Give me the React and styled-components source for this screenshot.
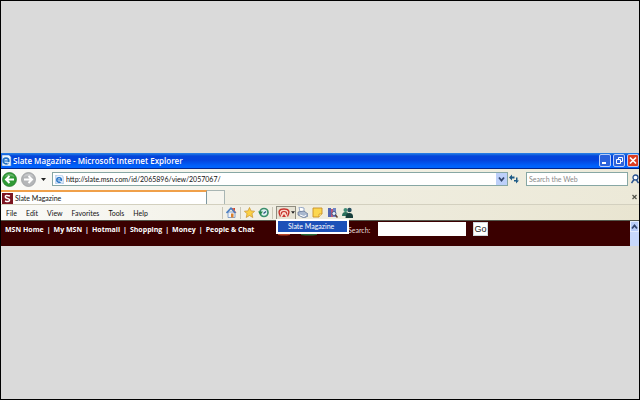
import React, { useState } from "react";
import styled, { createGlobalStyle } from "styled-components";

const GlobalStyle = createGlobalStyle`
  * {
    box-sizing: border-box;
  }
  body {
    margin: 0;
    background: #dadada;
    font-family: Lato, "Noto Sans", sans-serif;
    font-size: 7px;
    color: #111;
  }
  button,
  input {
    font: inherit;
    margin: 0;
    padding: 0;
    border: none;
    border-radius: 0;
    background: none;
    color: inherit;
  }
  svg {
    display: block;
    flex: none;
  }
`;

const Desktop = styled.div`
  min-height: 100vh;
  padding-bottom: 1px;
  display: flex;
  align-items: center;
  border: 1px solid #000;
  background: #dadada;
`;

const Window = styled.div`
  flex: 1;
  min-width: 0;
`;

const TitleBar = styled.header`
  height: 16px;
  display: flex;
  align-items: center;
  gap: 1px;
  border-bottom: 1px solid #00258c;
  background: linear-gradient(#2a86e6 0, #0445da 3px, #0443dc 7px, #0062fc 13px);
  h1 {
    flex: 1;
    margin: 0;
    font-family: "Open Sans", "Noto Sans", sans-serif;
    font-size: 8px;
    line-height: 12px;
    font-weight: 600;
    color: #fff;
    white-space: nowrap;
  }
`;

const WindowButton = styled.button`
  width: 12px;
  height: 13px;
  margin-left: 1px;
  border: 1px solid #b9cdf8;
  border-radius: 2px;
  background: ${(props) => (props.$close ? "#dc3c22" : "#2c62dc")};
`;

const AddressRow = styled.div`
  height: 21px;
  padding-bottom: 1px;
  display: flex;
  align-items: center;
  background: linear-gradient(90deg, #fafaf8, #f4f3ea 35%, #ece9d8);
`;

const IconButton = styled.button`
  height: 16px;
  display: flex;
  align-items: center;
  justify-content: center;
  margin-left: ${(props) => props.$gap || 0}px;
`;

const AddressBox = styled.label`
  flex: 1;
  height: 14px;
  margin-left: 6px;
  padding-left: 2px;
  display: flex;
  align-items: center;
  gap: 2px;
  border: 1px solid #87a7a4;
  background: #fff;
  input {
    flex: 1;
    min-width: 0;
    outline: none;
  }
`;

const DropButton = styled.button`
  width: 11px;
  height: 12px;
  display: flex;
  align-items: center;
  justify-content: center;
  background: #bdd0fa;
`;

const WebSearch = styled.input.attrs({ type: "text" })`
  width: 102px;
  height: 14px;
  margin: 0 3px 0 7px;
  padding-left: 2px;
  border: 1px solid #87a7a4;
  background: #fff;
  outline: none;
  &::placeholder {
    color: #8a8a8a;
    opacity: 1;
  }
`;

const TabRow = styled.div`
  height: 14px;
  display: flex;
  align-items: stretch;
  background: linear-gradient(90deg, #f3f2e8, #ece9d8);
`;

const Tab = styled.button`
  width: 206px;
  padding-left: 1px;
  display: flex;
  align-items: center;
  gap: 2px;
  border-top: 2px solid #f0a04a;
  border-right: 1px solid #7d97a0;
  background: #fff;
`;

const NewTab = styled.button`
  width: 18px;
  border-top: 1px solid #a9b6b4;
  border-right: 1px solid #a9b6b4;
  background: #f6f5ee;
`;

const CloseTab = styled.button`
  width: 9px;
  margin-left: auto;
  display: flex;
  align-items: center;
  justify-content: center;
`;

const MenuRow = styled.div`
  height: 17px;
  display: flex;
  align-items: center;
  border-top: 1px solid #d3d0bf;
  border-bottom: 1px solid #55584c;
  background: linear-gradient(90deg, #fafaf8, #efede0 50%, #e9e5d1);
`;

const Menus = styled.nav`
  width: 218px;
  padding-left: 5px;
  display: flex;
  gap: 9px;
`;

const Toolbar = styled.div`
  height: 14px;
  display: flex;
  align-items: center;
`;

const Divider = styled.span`
  width: 1px;
  height: 12px;
  margin: 0 3px;
  background: #c9c6b6;
`;

const FeedButton = styled.button`
  width: 20px;
  height: 14px;
  padding-left: 1px;
  display: flex;
  align-items: center;
  gap: 1px;
  border: 1px solid #8f8d80;
  background: #e6e3d4;
`;

const FeedArea = styled.div`
  position: relative;
`;

const FeedMenu = styled.ul`
  position: absolute;
  top: 13px;
  left: 0;
  z-index: 1;
  width: 73px;
  margin: 0;
  padding: 2px;
  list-style: none;
  background: #fff;
  button {
    width: 100%;
    height: 11px;
    padding-left: 10px;
    display: block;
    line-height: 11px;
    text-align: left;
    color: #fff;
    background: #1c50b8;
  }
`;

const Page = styled.main`
  height: 25px;
  display: flex;
  background: #3a0000;
  color: #fff;
`;

const PageLinks = styled.nav`
  width: 276px;
  padding: 4px 0 0 4px;
  display: flex;
  gap: 3px;
  font-family: "Open Sans", "Noto Sans", sans-serif;
  font-size: 7px;
  line-height: 10px;
  font-weight: 700;
  white-space: nowrap;
  a {
    color: #fff;
    text-decoration: none;
  }
`;

const SiteLogo = styled.div`
  width: 71px;
  padding-top: 3px;
`;

const SiteSearch = styled.form`
  flex: 1;
  padding-top: 1px;
  display: flex;
  align-items: flex-start;
  label {
    width: 30px;
    padding-top: 3px;
    line-height: 10px;
    color: #e6dada;
  }
  input {
    width: 88px;
    height: 14px;
    padding: 0 2px;
    color: #111;
    background: #fff;
    outline: none;
  }
  button {
    width: 15px;
    height: 14px;
    margin-left: 7px;
    font-family: "Liberation Sans", sans-serif;
    font-size: 9px;
    line-height: 12px;
    color: #222;
    border: 1px solid #cfd8dc;
    background: #fff;
  }
`;

const ScrollBar = styled.div`
  width: 9px;
  background: #c8d8fb;
  button {
    width: 9px;
    height: 11px;
    display: flex;
    align-items: center;
    justify-content: center;
    border: 1px solid #e4ecfe;
    background: #b8ccf8;
  }
`;

const IePage = ({ size }) => (
  <svg width={size} height={size} viewBox="0 0 11 11">
    <path d="M1 0h7l2 2v9H1z" fill="#eaf4ff" stroke="#5b8fc9" strokeWidth=".6" />
    <circle cx="5" cy="6" r="2.800" fill="none" stroke="#1f6fc4" strokeWidth="1.700" />
    <path d="M3 6h5" stroke="#1f6fc4" strokeWidth="1.200" />
    <path d="M6 7.800h3" stroke="#eaf4ff" strokeWidth="1.200" />
  </svg>
);

const Minimize = () => (
  <svg width="10" height="11" viewBox="0 0 10 11">
    <path d="M2 8h4" stroke="#fff" strokeWidth="2" />
  </svg>
);

const Restore = () => (
  <svg width="10" height="11" viewBox="0 0 10 11" fill="none" stroke="#fff">
    <path d="M4.500 4V2.500h4v4H7M2.500 4.500h4v4h-4z" />
  </svg>
);

const Close = () => (
  <svg width="10" height="11" viewBox="0 0 10 11">
    <path d="M2 2.500l6 6m0-6l-6 6" stroke="#fff" strokeWidth="1.700" />
  </svg>
);

const Arrow = ({ forward }) => (
  <svg width="15" height="15" viewBox="0 0 15 15">
    <circle cx="7.5" cy="7.5" r="7" fill={forward ? "#b4b6b8" : "#2f9a35"} stroke={forward ? "#969a9c" : "#247a2b"} strokeWidth=".7" />
    <path d="M2.500 5a5.500 5.500 0 0 1 10 0q-5-2-10 0z" fill="#fff" opacity=".25" />
    <path
      d={forward ? "M3 7.500h8M7.500 4l3.500 3.500L7.500 11" : "M12 7.500H4M7.500 4L4 7.500 7.500 11"}
      fill="none"
      stroke="#fff"
      strokeWidth="2"
    />
  </svg>
);

const Caret = ({ width = 5 }) => (
  <svg width={width} height="3" viewBox="0 0 5 3">
    <path d="M0 0h5L2.500 3z" fill="#222" />
  </svg>
);

const Chevron = ({ up }) => (
  <svg width="7" height="6" viewBox="0 0 7 6">
    <path d={up ? "M1 4.500l2.500-3 2.500 3" : "M1 1.500l2.500 3 2.500-3"} fill="none" stroke="#33466e" strokeWidth="1.800" />
  </svg>
);

const Refresh = () => (
  <svg width="10" height="10" viewBox="0 0 10 10">
    <path d="M0 3.500L3 .5v2h2.500v2H3v2zM10 6.500l-3 3v-2H5v-1.500h2V3.500h1.500v3z" fill="#1d5a86" />
  </svg>
);

const Magnifier = () => (
  <svg width="8" height="10" viewBox="0 0 8 10">
    <circle cx="4.500" cy="3.500" r="2.500" fill="#fff" stroke="#2a5490" strokeWidth="1.300" />
    <path d="M3 5.500L.5 9M5.500 6L7.500 9" stroke="#2a5490" strokeWidth="1.500" />
  </svg>
);

const SlateLogo = () => (
  <svg width="11" height="11" viewBox="0 0 11 11">
    <path d="M0 0h11v11H0z" fill="#7c1420" />
    <path d="M8 3Q3 1.500 3.300 4q.3 1 2.200 1.500 2.500.5 2 2Q7 9.300 3 8" fill="none" stroke="#fff" strokeWidth="1.400" />
  </svg>
);

const Cross = () => (
  <svg width="5" height="6" viewBox="0 0 5 6">
    <path d="M.5 1l4 4m0-4l-4 4" stroke="#55554c" strokeWidth="1.200" />
  </svg>
);

const Home = () => (
  <svg width="11" height="11" viewBox="0 0 11 11">
    <path d="M2 5h7v5.500H2z" fill="#eef3fb" stroke="#6c8fc0" strokeWidth=".8" />
    <path d="M5 1h2l3.500 5H8z" fill="#e2613c" />
    <path d="M.5 6L5 1.200 9.500 6" fill="none" stroke="#4a7ec2" strokeWidth="1.600" />
    <path d="M7 1h2v3z" fill="#c8432c" />
    <path d="M5 6.500h2.500v4H5z" fill="#d9802e" />
  </svg>
);

const Star = () => (
  <svg width="11" height="11" viewBox="0 0 11 11">
    <path d="M5.500.5l1.500 3.400 3.600.3L8 6.800l.8 3.700-3.300-2-3.300 2L3 6.800.4 4.200 4 3.900z" fill="#fbd145" stroke="#c9902a" strokeWidth=".7" />
  </svg>
);

const History = () => (
  <svg width="11" height="11" viewBox="0 0 11 11">
    <circle cx="6" cy="5.500" r="4" fill="#dff0f0" stroke="#3c8f6c" strokeWidth="1.700" />
    <path d="M0 4.500h5L2.500 8z" fill="#27874a" />
    <path d="M5.500 6.500L8 4.500" fill="none" stroke="#25507c" strokeWidth="1.200" />
  </svg>
);

const Feed = () => (
  <svg width="12" height="10" viewBox="0 0 12 10" fill="none" stroke="#c8322c">
    <path d="M2.500 8.500Q-1.500 1 6 1t3.500 7.500" fill="#f8d8cc" strokeWidth="1.400" />
    <path d="M3.300 6.500Q3 3.500 6 3.500t2.700 3" strokeWidth="1.200" />
    <path d="M4 9L6 6l2 3z" fill="#c8322c" stroke="none" />
  </svg>
);

const Printer = () => (
  <svg width="11" height="11" viewBox="0 0 11 11">
    <path d="M2 0l5 1v4H3z" fill="#fff" stroke="#7f96ba" strokeWidth=".8" />
    <path d="M1 5l6-1 4 3v2L7 11 1 8z" fill="#a9b8cf" stroke="#5c6f8f" strokeWidth=".7" />
    <path d="M3 8l4 1.500L9 8" fill="none" stroke="#fff" />
  </svg>
);

const Note = () => (
  <svg width="11" height="11" viewBox="0 0 11 11">
    <path d="M1 1h9v6L7 10H1z" fill="#fcd750" stroke="#c88e26" strokeWidth=".9" />
    <path d="M7 10V7h3" fill="#fff2ae" stroke="#c88e26" strokeWidth=".7" />
  </svg>
);

const Research = () => (
  <svg width="11" height="11" viewBox="0 0 11 11">
    <path d="M1 1h3v9H1z" fill="#5366b2" />
    <path d="M4 2h2v8H4z" fill="#b9597a" />
    <path d="M6 1h3v9H6z" fill="#7084c4" />
    <circle cx="7" cy="6.500" r="2" fill="#e6effa" stroke="#33497c" strokeWidth=".8" />
    <path d="M8.500 8l2 2.500" stroke="#5d3d31" strokeWidth="1.400" />
  </svg>
);

const Messenger = () => (
  <svg width="11" height="11" viewBox="0 0 11 11">
    <circle cx="3.500" cy="3" r="2" fill="#3f8c75" />
    <path d="M0 9q0-4 3.500-4T7 9z" fill="#2b6f5c" />
    <circle cx="7.500" cy="3" r="2.200" fill="#274f5e" />
    <path d="M3.500 11q0-5 4-5t3.500 5z" fill="#173f3c" />
  </svg>
);

const MsnMark = () => (
  <svg width="50" height="12" viewBox="0 0 50 12">
    <path d="M1 4q6-4 12 0v7q-6 1-12 0z" fill="#b8452a" />
    <path d="M24 4q8-4 16 0v7q-8 1-16 0z" fill="#2a6a3c" />
  </svg>
);

const menuList = ["File", "Edit", "View", "Favorites", "Tools", "Help"];

const linkList = ["MSN Home", "My MSN", "Hotmail", "Shopping", "Money", "People & Chat"];

const App = () => {
  const [feedOpen, setFeedOpen] = useState(true);
  return (
    <>
      <GlobalStyle />
      <Desktop>
        <Window>
          <TitleBar>
            <IePage size={11} />
            <h1>Slate Magazine - Microsoft Internet Explorer</h1>
            <WindowButton aria-label="Minimize">
              <Minimize />
            </WindowButton>
            <WindowButton aria-label="Restore">
              <Restore />
            </WindowButton>
            <WindowButton $close aria-label="Close">
              <Close />
            </WindowButton>
          </TitleBar>
          <AddressRow>
            <IconButton $gap={1} aria-label="Back">
              <Arrow />
            </IconButton>
            <IconButton $gap={4} aria-label="Forward">
              <Arrow forward />
            </IconButton>
            <IconButton $gap={5} aria-label="Recent pages">
              <Caret />
            </IconButton>
            <AddressBox>
              <IePage size={9} />
              <input
                type="text"
                aria-label="Address"
                defaultValue="http://slate.msn.com/id/2065896/view/2057067/"
              />
              <DropButton aria-label="Show address list">
                <Chevron />
              </DropButton>
            </AddressBox>
            <IconButton $gap={1} aria-label="Refresh">
              <Refresh />
            </IconButton>
            <WebSearch placeholder="Search the Web" aria-label="Search the Web" />
            <IconButton aria-label="Search">
              <Magnifier />
            </IconButton>
          </AddressRow>
          <TabRow>
            <Tab>
              <SlateLogo />
              Slate Magazine
            </Tab>
            <NewTab aria-label="New tab" />
            <CloseTab aria-label="Close tab">
              <Cross />
            </CloseTab>
          </TabRow>
          <MenuRow>
            <Menus>
              {menuList.map((menu) => (
                <button key={menu}>{menu}</button>
              ))}
            </Menus>
            <Toolbar>
              <Divider />
              <IconButton aria-label="Home">
                <Home />
              </IconButton>
              <Divider />
              <IconButton aria-label="Favorites">
                <Star />
              </IconButton>
              <IconButton $gap={3} aria-label="History">
                <History />
              </IconButton>
              <Divider />
              <FeedArea>
                <FeedButton aria-label="Feeds" onClick={() => setFeedOpen(!feedOpen)}>
                  <Feed />
                  <Caret width={4} />
                </FeedButton>
                {feedOpen && (
                  <FeedMenu>
                    <li>
                      <button>Slate Magazine</button>
                    </li>
                  </FeedMenu>
                )}
              </FeedArea>
              <IconButton $gap={1} aria-label="Print">
                <Printer />
              </IconButton>
              <IconButton $gap={4} aria-label="Edit">
                <Note />
              </IconButton>
              <IconButton $gap={4} aria-label="Research">
                <Research />
              </IconButton>
              <IconButton $gap={4} aria-label="Messenger">
                <Messenger />
              </IconButton>
            </Toolbar>
          </MenuRow>
          <Page>
            <PageLinks>
              {linkList.map((link, index) => (
                <React.Fragment key={link}>
                  {index > 0 && <span>|</span>}
                  <a href="#">{link}</a>
                </React.Fragment>
              ))}
            </PageLinks>
            <SiteLogo>
              <MsnMark />
            </SiteLogo>
            <SiteSearch onSubmit={(e) => e.preventDefault()}>
              <label htmlFor="site-search">Search:</label>
              <input id="site-search" type="text" />
              <button type="submit">Go</button>
            </SiteSearch>
            <ScrollBar>
              <button aria-label="Scroll up">
                <Chevron up />
              </button>
            </ScrollBar>
          </Page>
        </Window>
      </Desktop>
    </>
  );
};

export default App;
